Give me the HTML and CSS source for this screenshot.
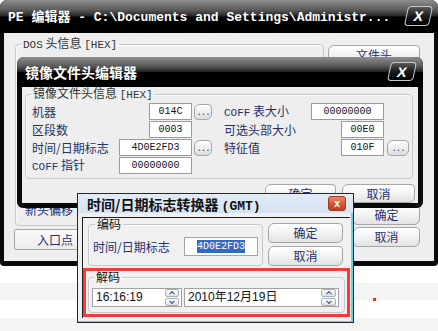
FILE: index.html
```html
<!DOCTYPE html>
<html lang="zh-CN">
<head>
  <meta charset="UTF-8" />
  <title>PE 编辑器</title>
  <link rel="stylesheet" href="styles.css">
</head>
<body>
  <!-- PE editor main window (background) -->
  <div class="win pe-win">
    <div class="titlebar dark-bar pe-bar">
      <span class="pe-title">PE 编辑器 - C:\Documents and Settings\Administr...</span>
      <span class="close-btn dark-close">X</span>
    </div>
    <div class="win-body pe-body">
      <fieldset class="group dos-group">
        <legend><span class="lat">DOS</span> 头信息 <span class="lat">[HEX]</span></legend>
        <div class="dos-grid">
          <span class="label">魔术数字</span><span class="edit w43">5A4D</span><span class="label">初始 SS 值</span><span class="edit w43">0000</span>
          <span class="label">最后页字节</span><span class="edit w43">0090</span><span class="label">初始 SP 值</span><span class="edit w43">00B8</span>
          <span class="label">文件页数</span><span class="edit w43">0003</span><span class="label">校验和</span><span class="edit w43">0000</span>
          <span class="label">重定位</span><span class="edit w43">0000</span><span class="label">初始 IP 值</span><span class="edit w43">0000</span>
          <span class="label">头部大小</span><span class="edit w43">0004</span><span class="label">初始 CS 值</span><span class="edit w43">0000</span>
          <span class="label">最小附加段</span><span class="edit w43">0000</span><span class="label">重定位表</span><span class="edit w43">0040</span>
          <span class="label">最大附加段</span><span class="edit w43">FFFF</span><span class="label">覆盖号</span><span class="edit w43">0000</span>
          <span class="label">OEM 标识</span><span class="edit w43">0000</span><span class="label">OEM 信息</span><span class="edit w43">0000</span>
          <span class="label">新头偏移</span><span class="edit w43">00E8</span><span class="label">保留字</span><span class="edit w43">0000</span>
        </div>
      </fieldset>
      <div class="pe-side">
        <button class="btn btn-file">文件头</button>
        <button class="btn btn-ok">确定</button>
        <button class="btn btn-cancel">取消</button>
      </div>
      <button class="btn btn-entry">入口点</button>
    </div>
  </div>

  <!-- Image file header editor -->
  <div class="win img-win">
    <div class="titlebar dark-bar img-bar">
      <span class="img-title">镜像文件头编辑器</span>
      <span class="close-btn dark-close img-close">X</span>
    </div>
    <div class="win-body img-body">
      <fieldset class="group img-group">
        <legend>镜像文件头信息 <span class="lat">[HEX]</span></legend>
        <div class="img-grid">
          <span class="label">机器</span><span class="edit w43">014C</span><button class="dots">...</button>
          <span class="label r-label"><span class="lat">COFF</span> 表大小</span><span class="edit w73">00000000</span><span></span>

          <span class="label">区段数</span><span class="edit w43">0003</span><span></span>
          <span class="label r-label">可选头部大小</span><span class="edit w43">00E0</span><span></span>

          <span class="label">时间/日期标志</span><span class="edit w73">4D0E2FD3</span><button class="dots">...</button>
          <span class="label r-label">特征值</span><span class="edit w43">010F</span><button class="dots wide-dots">...</button>

          <span class="label"><span class="lat">COFF</span> 指针</span><span class="edit w73">00000000</span>
        </div>
      </fieldset>
      <div class="img-buttons">
        <button class="btn img-ok">确定</button>
        <button class="btn img-cancel">取消</button>
      </div>
    </div>
  </div>

  <!-- Time/date stamp converter -->
  <div class="win conv-win">
    <div class="titlebar conv-bar">
      <span class="conv-title">时间/日期标志转换器 <span class="lat-b">(GMT)</span></span>
      <span class="close-btn red-close">x</span>
    </div>
    <div class="conv-body">
      <div class="conv-panel">
        <div class="conv-top">
          <fieldset class="group enc-group">
            <legend>编码</legend>
            <div class="enc-row">
              <span class="label">时间/日期标志</span>
              <span class="edit stamp-edit"><span class="selected">4D0E2FD3</span></span>
            </div>
          </fieldset>
          <div class="conv-buttons">
            <button class="btn">确定</button>
            <button class="btn">取消</button>
          </div>
        </div>
        <div class="red-box">
          <fieldset class="group dec-group">
            <legend>解码</legend>
            <div class="dec-row">
              <span class="edit spin-edit time-edit">16:16:19
                <span class="spin"><span class="spin-up"></span><span class="spin-down"></span></span>
              </span>
              <span class="edit spin-edit date-edit">2010年12月19日
                <span class="spin"><span class="spin-up"></span><span class="spin-down"></span></span>
              </span>
            </div>
          </fieldset>
        </div>
      </div>
    </div>
  </div>

  <!-- stray red mark on the desktop -->
  <div class="red-dot"></div>
</body>
</html>
```

FILE: styles.css
```css
/* Page reset, striped desktop behind the windows */
html, body {
  margin: 0;
  padding: 0;
}

body {
  width: 438px;
  height: 331px;
  overflow: hidden;
  position: relative;
  font-family: "Liberation Sans", "Noto Sans CJK SC", sans-serif;
  font-size: 12px;
  color: #222;
  background: repeating-linear-gradient(to bottom,
    #fff 0, #fff 3px, #f4f4f4 3px, #f4f4f4 20px, #fff 20px, #fff 35px);
}

button {
  font-family: inherit;
  font-size: 12px;
  padding: 0;
}

/* Generic window frame */
.win {
  position: absolute;
  box-sizing: border-box;
  display: flex;
  flex-direction: column;
  overflow: hidden;
}

.titlebar {
  display: flex;
  align-items: center;
  flex-shrink: 0;
}

/* Black glossy title bars */
.dark-bar {
  background: linear-gradient(#8e8e8e 0%, #5a5a5a 30%, #262626 48%, #000 52%, #000 100%);
  color: #fff;
  font-weight: bold;
}

.dark-close {
  margin-left: auto;
  box-sizing: border-box;
  border: 1px solid #c9c9c9;
  border-radius: 4px;
  background: linear-gradient(#5a5a5a, #1a1a1a 50%, #000);
  color: #fff;
  font-family: "Liberation Sans", sans-serif;
  font-weight: bold;
  display: flex;
  align-items: center;
  justify-content: center;
  transform: skewX(-12deg);
}

/* Plain grey window body */
.win-body {
  background: #eeeeee;
  flex: 1;
  min-height: 0;
}

/* Group boxes */
.group {
  margin: 0;
  padding: 0;
  min-width: 0;
  border: 1px solid #c8c8c8;
  border-radius: 4px;
  box-shadow: inset 1px 1px 0 #fafafa;
}

.group legend {
  padding: 0 2px;
  line-height: 12px;
  font-size: 12px;
  font-family: "Noto Sans CJK SC", sans-serif;
  color: #333;
}

.lat {
  font-family: "Liberation Mono", monospace;
  font-size: 11px;
}

.label {
  color: #27306c;
  font-family: "Noto Sans CJK SC", sans-serif;
  white-space: nowrap;
  align-self: center;
  line-height: 14px;
}

/* Text boxes */
.edit {
  box-sizing: border-box;
  height: 17px;
  border: 1px solid #9b9b9b;
  background: #fff;
  font-family: "Liberation Mono", monospace;
  font-size: 10px;
  line-height: 15px;
  text-align: center;
  color: #111;
  justify-self: end;
}

.w43 { width: 43px; }
.w73 { width: 73px; }

/* Glossy rounded buttons */
.btn {
  box-sizing: border-box;
  height: 20px;
  border: 1px solid #a6a6a6;
  border-radius: 6px 4px 6px 4px;
  background: linear-gradient(#ffffff, #f4f4f4 45%, #e2e2e2);
  color: #27306c;
  font-family: "Noto Sans CJK SC", sans-serif;
  line-height: 18px;
}

.dots {
  box-sizing: border-box;
  width: 18px;
  height: 16px;
  justify-self: end;
  align-self: center;
  border: 1px solid #a6a6a6;
  border-radius: 6px 4px 6px 4px;
  background: linear-gradient(#ffffff, #ececec 55%, #dcdcdc);
  color: #27306c;
  font-family: "Liberation Mono", monospace;
  font-size: 9px;
  line-height: 16px;
  letter-spacing: -1px;
}

.wide-dots { width: 22px; }

/* ---------- PE editor window ---------- */
.pe-win {
  left: 0;
  top: 0;
  width: 438px;
  height: 266px;
  background: #0a0a0a;
  border-radius: 7px 7px 4px 4px;
}

.pe-bar {
  height: 31px;
  padding: 0 7px 2px 8px;
}

.pe-title {
  font-family: "Liberation Mono", "Noto Sans CJK SC", monospace;
  font-size: 13px;
  white-space: nowrap;
}

.pe-bar .dark-close {
  width: 25px;
  height: 20px;
  font-size: 14px;
}

.pe-body {
  margin: 0 4px 5px;
  padding: 4px 0 0 11px;
  display: grid;
  grid-template-columns: 309px 92px;
  grid-template-rows: 187px auto;
  column-gap: 4px;
  align-items: start;
}

.dos-group {
  grid-row: 1;
  grid-column: 1;
  height: 187px;
}

.dos-group legend {
  margin-left: 5px;
}

.dos-grid {
  display: grid;
  grid-template-columns: 104px 43px 112px 43px;
  grid-auto-rows: 17px;
  row-gap: 1px;
  padding: 6px 0 0 9px;
}

.pe-side {
  grid-row: 1 / span 2;
  grid-column: 2;
  height: 210px;
  display: flex;
  flex-direction: column;
  align-items: flex-end;
}

.btn-file {
  width: 92px;
  margin-top: 8px;
}

.btn-ok {
  width: 67px;
  margin-top: auto;
}

.btn-cancel {
  width: 67px;
  margin-top: 2px;
}

.btn-entry {
  grid-row: 2;
  grid-column: 1;
  width: 82px;
  height: 21px;
  margin: 5px 0 0 -1px;
  border-radius: 2px;
  background: linear-gradient(#fafafa, #ececec);
}

/* ---------- Image file header editor ---------- */
.img-win {
  left: 17px;
  top: 57px;
  width: 406px;
  height: 151px;
  background: #0a0a0a;
  border-radius: 7px 7px 6px 6px;
}

.img-bar {
  height: 29px;
  padding: 0 8px 1px 8px;
}

.img-title {
  font-family: "Noto Sans CJK SC", sans-serif;
  font-size: 14px;
  letter-spacing: 0;
}

.img-close {
  width: 26px;
  height: 19px;
  font-size: 14px;
}

.img-body {
  margin: 0 5px 5px;
}

.img-group {
  margin: 0 5px 0 3px;
}

.img-group legend {
  margin-left: 5px;
}

.img-grid {
  display: grid;
  grid-template-columns: 87px 73px 20px 99px 73px 25px;
  grid-auto-rows: 17px;
  row-gap: 1px;
  padding: 2px 0 4px 6px;
}

.r-label {
  padding-left: 12px;
}

.img-buttons {
  display: flex;
  justify-content: flex-end;
  gap: 6px;
  margin-top: 5px;
  padding-right: 3px;
}

.img-ok { width: 71px; height: 19px; }
.img-cancel { width: 73px; height: 19px; }

/* ---------- Time/date converter ---------- */
.conv-win {
  left: 77px;
  top: 193px;
  width: 277px;
  height: 130px;
  border: 1px solid #25292f;
  background: #f0f0f0;
  box-shadow: inset -2px 0 0 #6fcbe6, inset 0 -1px 0 #8fb8cc;
}

.conv-bar {
  height: 19px;
  padding: 0 7px 0 9px;
  background: linear-gradient(#e2ebf6, #d5e2f1);
}

.conv-title {
  font-family: "Noto Sans CJK SC", sans-serif;
  font-weight: bold;
  font-size: 14px;
  color: #111;
  white-space: nowrap;
}

.lat-b {
  font-family: "Liberation Mono", monospace;
  font-size: 13px;
}

.red-close {
  margin-left: auto;
  width: 18px;
  height: 15px;
  box-sizing: border-box;
  border: 1px solid #9b3a22;
  border-radius: 3px;
  background: linear-gradient(#ee8a66, #d4552f 55%, #c2401f);
  color: #fff;
  font-weight: bold;
  font-size: 11px;
  line-height: 12px;
  text-align: center;
}

.conv-body {
  flex: 1;
  padding: 4px 3px 4px 4px;
}

.conv-panel {
  height: 100%;
  box-sizing: border-box;
  border-top: 1px solid #1c1c1c;
  border-left: 1px solid #1c1c1c;
}

.conv-top {
  display: flex;
  gap: 5px;
  padding-left: 5px;
}

.enc-group {
  width: 175px;
  box-sizing: border-box;
}

.enc-group legend {
  margin-left: 6px;
  color: #111;
}

.enc-row {
  display: flex;
  align-items: center;
  justify-content: space-between;
  padding: 7px 4px 8px 4px;
}

.stamp-edit {
  width: 74px;
  height: 19px;
  line-height: 17px;
  border-color: #a3a3a3;
}

.selected {
  background: #316ac5;
  color: #fff;
  padding: 1px 0;
}

.conv-buttons {
  display: flex;
  flex-direction: column;
  gap: 3px;
  margin-top: 5px;
}

.conv-buttons .btn {
  width: 75px;
}

.red-box {
  margin-top: 2px;
  height: 49px;
  box-sizing: border-box;
  border: 3px solid #f23b3b;
}

.dec-group {
  margin: 0 2px;
}

.dec-group legend {
  margin-left: 5px;
  color: #111;
}

.dec-row {
  display: flex;
  gap: 2px;
  padding: 5px 4px 5px 3px;
}

.spin-edit {
  position: relative;
  height: 19px;
  line-height: 17px;
  text-align: left;
  padding-left: 3px;
  font-family: "Liberation Sans", "Noto Sans CJK SC", sans-serif;
  font-size: 12px;
  border-color: #a3a3a3;
}

.time-edit { width: 90px; }
.date-edit { width: 155px; }

/* little up/down arrows sitting inside the box */
.spin {
  position: absolute;
  right: 2px;
  top: 0;
  width: 14px;
  height: 17px;
  display: flex;
  flex-direction: column;
  gap: 1px;
}

.date-edit .spin {
  width: 15px;
}

.spin-up, .spin-down {
  flex: 1;
  border: 1px solid #a9b0b8;
  border-radius: 2px;
  background: linear-gradient(#fdfdfd, #e1e1e1);
  position: relative;
}

.spin-up::after, .spin-down::after {
  content: '';
  position: absolute;
  left: 50%;
  top: 50%;
  width: 3px;
  height: 3px;
  border-left: 1px solid #2b4e9a;
  border-top: 1px solid #2b4e9a;
}

.spin-up::after {
  transform: translate(-50%, -30%) rotate(45deg);
}

.spin-down::after {
  transform: translate(-50%, -70%) rotate(225deg);
}

.red-dot {
  position: absolute;
  left: 373px;
  top: 298px;
  width: 3px;
  height: 3px;
  background: #f03030;
}
```
